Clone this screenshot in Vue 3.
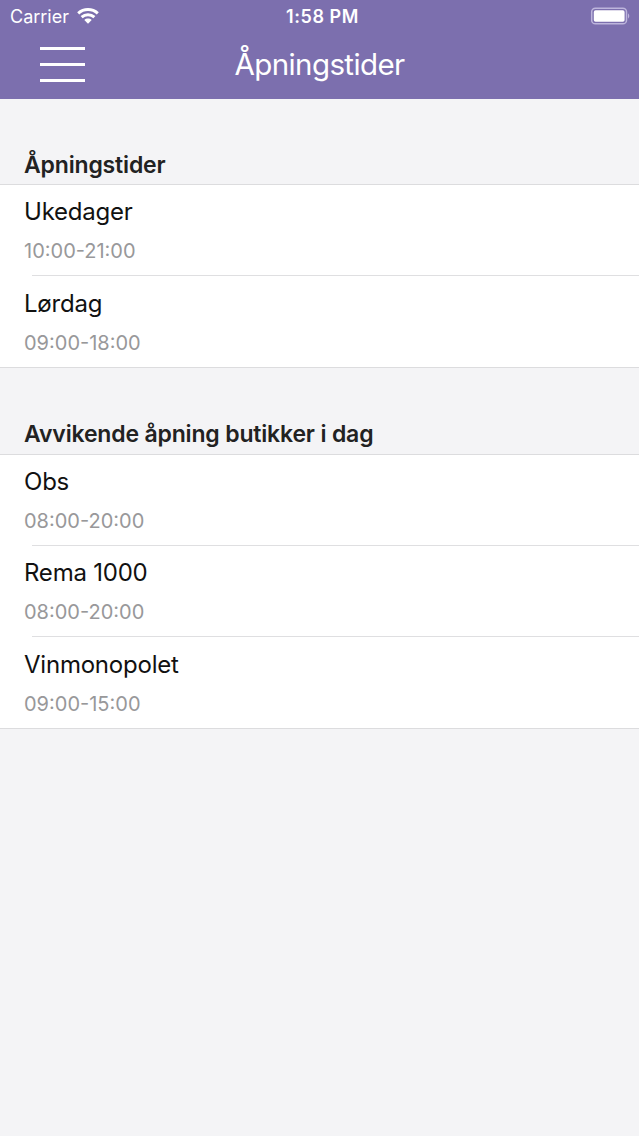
<template>
  <div class="page">
    <header class="header">
      <div class="status">
        <div class="status__carrier">
          <span class="carrier">Carrier</span>
          <svg class="wifi" viewBox="0 0 22 16" width="22" height="16">
            <path d="M1.2 5.4C6.8 .3 15.2 .3 20.8 5.4" />
            <path d="M4.6 9.2C8.3 6 13.7 6 17.4 9.2" />
            <path class="wifi__dot" d="M7.3 12C9.4 10.1 12.6 10.1 14.7 12L11 15.7Z" />
          </svg>
        </div>
        <span class="clock">1:58 PM</span>
        <svg class="battery" viewBox="0 0 41 18" width="41" height="18">
          <rect class="battery__frame" x="1.7" y="1.2" width="34.8" height="15.6" rx="3.6" />
          <rect class="battery__level" x="3.8" y="3.3" width="30.8" height="11.4" rx="1.8" />
          <path class="battery__cap" d="M38 6.3Q40.6 9 38 11.7Z" />
        </svg>
      </div>
      <div class="navbar">
        <button class="menu" type="button" aria-label="Meny">
          <span></span>
          <span></span>
          <span></span>
        </button>
        <h1 class="title">Åpningstider</h1>
      </div>
    </header>

    <section v-for="section in sections" :key="section.title" class="section">
      <h2 class="section__title">
        <span>{{ section.title }}</span>
      </h2>
      <ul class="list">
        <li v-for="item in section.items" :key="item.name" class="item">
          <span class="item__name">{{ item.name }}</span>
          <span class="item__hours">{{ item.hours }}</span>
        </li>
      </ul>
    </section>
  </div>
</template>

<script setup>
const sections = [
  {
    title: "Åpningstider",
    items: [
      { name: "Ukedager", hours: "10:00-21:00" },
      { name: "Lørdag", hours: "09:00-18:00" },
    ],
  },
  {
    title: "Avvikende åpning butikker i dag",
    items: [
      { name: "Obs", hours: "08:00-20:00" },
      { name: "Rema 1000", hours: "08:00-20:00" },
      { name: "Vinmonopolet", hours: "09:00-15:00" },
    ],
  },
];
</script>

<style scoped>
.page {
  min-height: 100vh;
  font-family: Inter, "Liberation Sans", sans-serif;
  color: #111;
  background: #f4f4f6;
}

.header {
  box-sizing: border-box;
  height: 99px;
  color: #fff;
  background: #7c6fae;
}

.status {
  display: grid;
  grid-template-columns: 1fr auto 1fr;
  align-items: center;
  height: 32px;
  padding: 0 8px 0 10px;
}

.status__carrier {
  display: flex;
  align-items: center;
  gap: 8px;
}

.carrier {
  font-size: 18px;
}

.wifi path {
  fill: none;
  stroke: #fff;
  stroke-width: 3;
}

.wifi .wifi__dot {
  fill: #fff;
  stroke: none;
}

.clock {
  padding-left: 4px;
  font-size: 18px;
  font-weight: 600;
  letter-spacing: 0.55px;
}

.battery {
  justify-self: end;
}

.battery__frame {
  fill: none;
  stroke: #bdb5dc;
  stroke-width: 1.5;
}

.battery__level {
  fill: #fff;
}

.battery__cap {
  fill: #bdb5dc;
}

.navbar {
  display: grid;
  grid-template-columns: 1fr auto 1fr;
  align-items: center;
  height: 64px;
  padding: 0 40px;
}

.menu {
  display: flex;
  flex-direction: column;
  justify-content: space-between;
  width: 45px;
  height: 35px;
  padding: 0;
  border: 0;
  background: none;
}

.menu span {
  height: 3px;
  background: #fff;
}

.title {
  margin: 0;
  font-size: 29.5px;
  font-weight: 400;
  letter-spacing: -0.6px;
}

.section__title {
  display: flex;
  align-items: flex-end;
  box-sizing: border-box;
  height: 86px;
  margin: 0;
  padding: 0 24px 6px;
  font-size: 23px;
  font-weight: 600;
  line-height: 28px;
  letter-spacing: -0.17px;
  color: #222;
}

.header + .section .section__title {
  height: 85px;
  padding-bottom: 5px;
}

.list {
  margin: 0;
  padding: 0;
  list-style: none;
  border-top: 1px solid #dcdcde;
  border-bottom: 1px solid #dcdcde;
  background: #fff;
}

.item {
  display: flex;
  flex-direction: column;
  box-sizing: border-box;
  height: 90px;
  padding: 12px 24px 0;
}

.item + .item {
  height: 91.5px;
  padding-top: 0;
}

.item + .item::before {
  content: "";
  height: 1px;
  margin: 0 -24px 12.5px 8px;
  background: #dfdfe1;
}

.item__name {
  font-size: 24px;
  line-height: 30px;
  letter-spacing: -0.22px;
}

.item__hours {
  margin-top: 11px;
  font-size: 20px;
  line-height: 26px;
  color: #98989a;
}
</style>

<style>
body {
  margin: 0;
  background: #f4f4f6;
}
</style>
